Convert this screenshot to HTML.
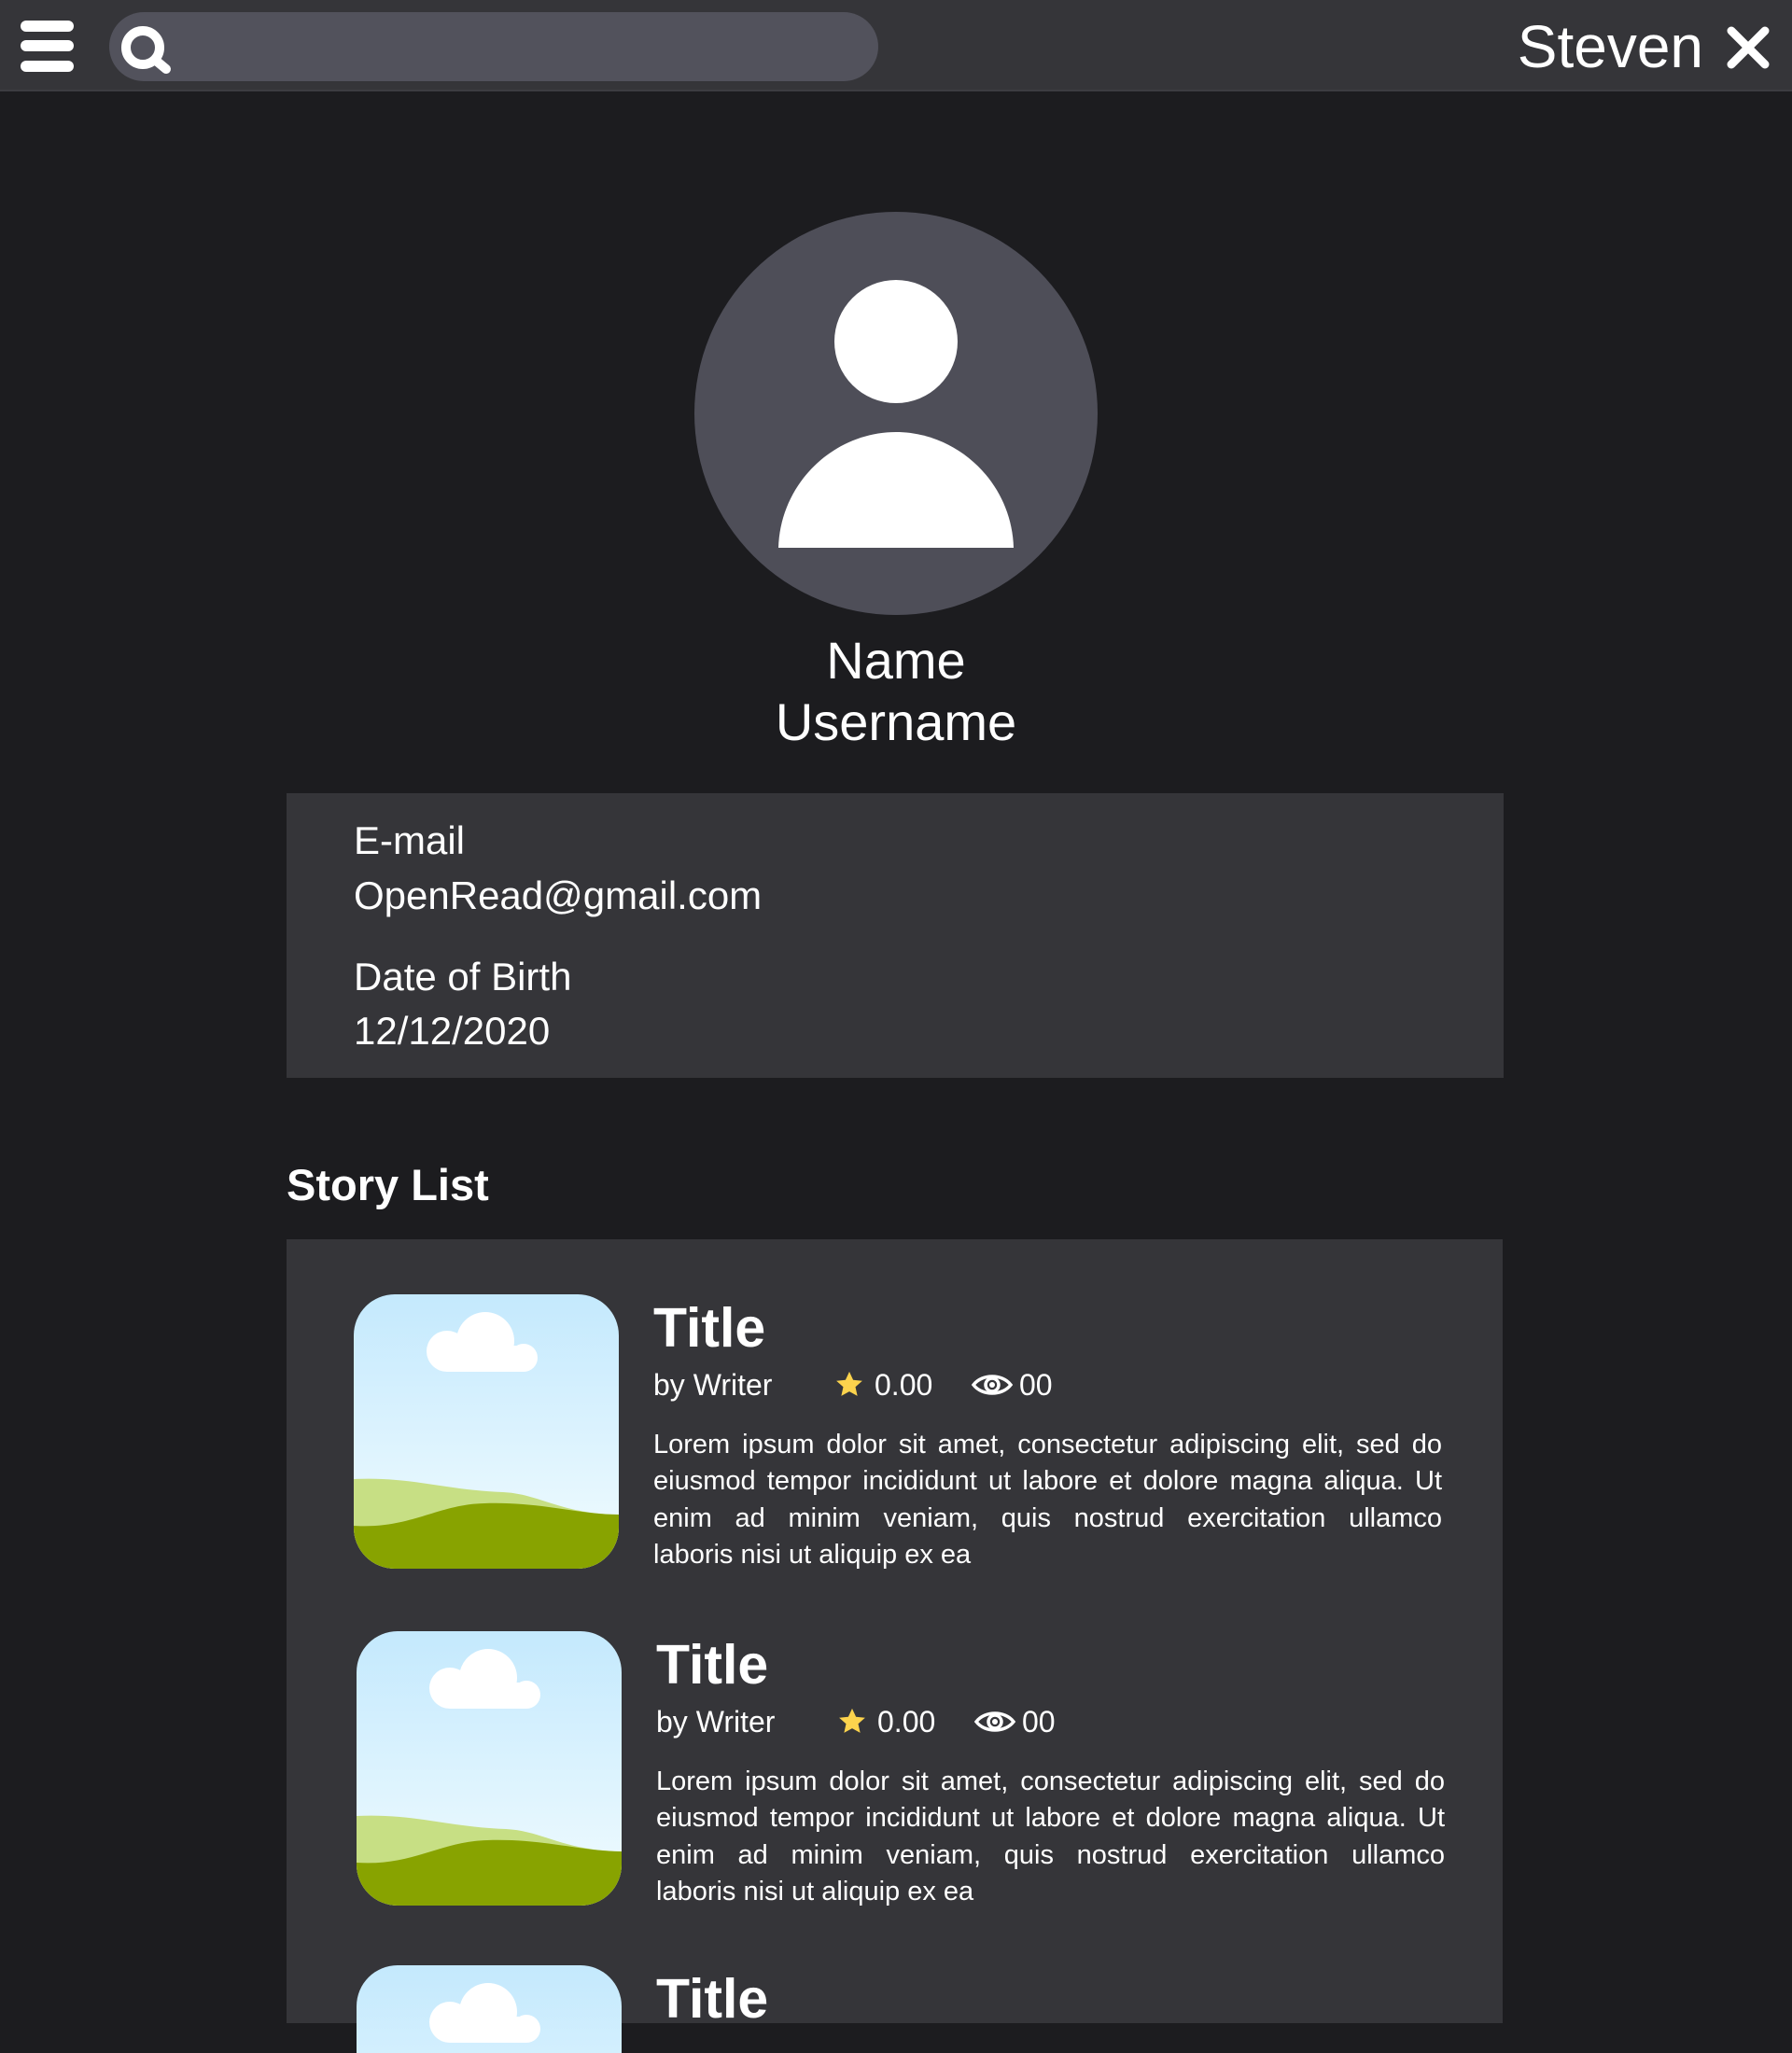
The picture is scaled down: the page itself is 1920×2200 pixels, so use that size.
<!DOCTYPE html>
<html style="width:1920px;height:2200px;overflow:hidden"><head><meta charset="utf-8">
<style>
*{margin:0;padding:0;box-sizing:border-box}
body{width:1920px;height:2200px;background:#1c1c1f;font-family:"Liberation Sans",sans-serif;color:#fff;position:relative;overflow:hidden}
.hdr{position:absolute;left:0;top:0;width:1920px;height:98px;background:#353539;border-bottom:2px solid #3c3c41}
.bar{position:absolute;left:22px;width:57px;height:12px;border-radius:6px;background:#fff}
.search{position:absolute;left:117px;top:13px;width:824px;height:74px;border-radius:37px;background:#52525c}
.user{position:absolute;right:95px;top:10px;font-size:64px;line-height:80px}
.abs{position:absolute}
.info{position:absolute;left:307px;top:850px;width:1304px;height:305px;background:#353539}
.info div{position:absolute;left:72px;font-size:42px;line-height:50px}
.panel{position:absolute;left:307px;top:1328px;width:1303px;height:840px;background:#353539}
.card{position:absolute;left:0;width:1303px}
.img{position:absolute;left:72px;top:59px;width:284px;height:294px}
.title{position:absolute;left:393px;top:60px;font-size:59px;font-weight:bold;line-height:70px}
.meta{position:absolute;left:393px;top:136px;font-size:32px;line-height:40px;white-space:nowrap}
.desc{position:absolute;left:393px;top:201px;width:845px;font-size:29px;line-height:39.3px}
.desc span{display:block;text-align:justify;text-align-last:justify;white-space:nowrap}
.desc span.l{text-align-last:left}
</style></head><body>
<div class="hdr">
 <div class="bar" style="top:22px"></div><div class="bar" style="top:43px"></div><div class="bar" style="top:65px"></div>
 <div class="search"></div>
 <svg class="abs" style="left:120px;top:20px" width="70" height="70" viewBox="120 20 70 70"><circle cx="153" cy="51" r="18" fill="none" stroke="#fff" stroke-width="10"/><line x1="166" y1="64" x2="178" y2="74" stroke="#fff" stroke-width="10" stroke-linecap="round"/></svg>
 <div class="user">Steven</div>
 <svg class="abs" style="left:1849px;top:27px" width="48" height="48" viewBox="0 0 48 48"><path d="M6 6L42 42M42 6L6 42" stroke="#fff" stroke-width="9" stroke-linecap="round"/></svg>
</div>
<svg class="abs" style="left:744px;top:227px" width="432" height="432" viewBox="0 0 432 432"><circle cx="216" cy="216" r="216" fill="#4e4e58"/><circle cx="216" cy="139" r="66" fill="#fff"/><path d="M90 360 C92 290 150 236 216 236 C282 236 340 290 342 360 Z" fill="#fff"/></svg>
<div class="abs" style="left:0;width:1920px;top:675px;text-align:center;font-size:56px;line-height:66px">Name<br>Username</div>
<div class="info">
 <div style="top:26px">E-mail</div>
 <div style="top:85px">OpenRead@gmail.com</div>
 <div style="top:172px">Date of Birth</div>
 <div style="top:230px">12/12/2020</div>
</div>
<div class="abs" style="left:307px;top:1240px;font-size:47px;font-weight:bold;line-height:60px">Story List</div>
<div class="panel">
<div class="card" style="top:0">
 <svg class="img" viewBox="0 0 284 294"><defs><linearGradient id="g" x1="0" y1="0" x2="0" y2="1"><stop offset="0" stop-color="#c4e9fd"/><stop offset="1" stop-color="#f2fcff"/></linearGradient><clipPath id="c"><rect width="284" height="294" rx="44"/></clipPath></defs><g clip-path="url(#c)"><rect width="284" height="294" fill="url(#g)"/><circle cx="100" cy="61" r="22" fill="#fff"/><circle cx="141" cy="50" r="31" fill="#fff"/><circle cx="182" cy="68" r="15" fill="#fff"/><rect x="100" y="55" width="82" height="28" fill="#fff"/><path d="M0 198 C60 195 100 210 160 212 C200 214 220 235 284 236 L284 294 L0 294Z" fill="#c7df84"/><path d="M0 248 C60 252 90 225 140 224 C200 222 240 236 284 236 L284 294 L0 294Z" fill="#88a300"/></g></svg>
 <div class="title">Title</div>
 <div class="meta">by Writer<svg style="position:absolute;left:193px;top:3px" width="34" height="34" viewBox="0 0 24 24"><path d="M12 2l2.9 6.3 6.9.7-5.2 4.6 1.5 6.8L12 17l-6.1 3.4 1.5-6.8L2.2 9l6.9-.7z" fill="#fcd34d"/></svg><span style="position:absolute;left:237px">0.00</span><svg style="position:absolute;left:340px;top:6px" width="46" height="28" viewBox="0 0 46 28"><path d="M3 14C12 2 34 2 43 14C34 26 12 26 3 14Z" fill="none" stroke="#fff" stroke-width="3.5"/><circle cx="23" cy="14" r="7" fill="none" stroke="#fff" stroke-width="3.5"/><circle cx="23" cy="14" r="3" fill="#fff"/></svg><span style="position:absolute;left:392px">00</span></div>
 <div class="desc"><span>Lorem ipsum dolor sit amet, consectetur adipiscing elit, sed do</span><span>eiusmod tempor incididunt ut labore et dolore magna aliqua. Ut</span><span>enim ad minim veniam, quis nostrud exercitation ullamco</span><span class="l">laboris nisi ut aliquip ex ea</span></div>
</div>
<div class="card" style="top:361px;left:3px">
 <svg class="img" viewBox="0 0 284 294"><g clip-path="url(#c)"><rect width="284" height="294" fill="url(#g)"/><circle cx="100" cy="61" r="22" fill="#fff"/><circle cx="141" cy="50" r="31" fill="#fff"/><circle cx="182" cy="68" r="15" fill="#fff"/><rect x="100" y="55" width="82" height="28" fill="#fff"/><path d="M0 198 C60 195 100 210 160 212 C200 214 220 235 284 236 L284 294 L0 294Z" fill="#c7df84"/><path d="M0 248 C60 252 90 225 140 224 C200 222 240 236 284 236 L284 294 L0 294Z" fill="#88a300"/></g></svg>
 <div class="title">Title</div>
 <div class="meta">by Writer<svg style="position:absolute;left:193px;top:3px" width="34" height="34" viewBox="0 0 24 24"><path d="M12 2l2.9 6.3 6.9.7-5.2 4.6 1.5 6.8L12 17l-6.1 3.4 1.5-6.8L2.2 9l6.9-.7z" fill="#fcd34d"/></svg><span style="position:absolute;left:237px">0.00</span><svg style="position:absolute;left:340px;top:6px" width="46" height="28" viewBox="0 0 46 28"><path d="M3 14C12 2 34 2 43 14C34 26 12 26 3 14Z" fill="none" stroke="#fff" stroke-width="3.5"/><circle cx="23" cy="14" r="7" fill="none" stroke="#fff" stroke-width="3.5"/><circle cx="23" cy="14" r="3" fill="#fff"/></svg><span style="position:absolute;left:392px">00</span></div>
 <div class="desc"><span>Lorem ipsum dolor sit amet, consectetur adipiscing elit, sed do</span><span>eiusmod tempor incididunt ut labore et dolore magna aliqua. Ut</span><span>enim ad minim veniam, quis nostrud exercitation ullamco</span><span class="l">laboris nisi ut aliquip ex ea</span></div>
</div>
<div class="card" style="top:719px;left:3px">
 <svg class="img" style="height:94px" viewBox="0 0 284 94" preserveAspectRatio="xMidYMin slice"><g clip-path="url(#c)"><rect width="284" height="294" fill="url(#g)"/><circle cx="100" cy="61" r="22" fill="#fff"/><circle cx="141" cy="50" r="31" fill="#fff"/><circle cx="182" cy="68" r="15" fill="#fff"/><rect x="100" y="55" width="82" height="28" fill="#fff"/></g></svg>
 <div class="title">Title</div>
</div>
</div>
</body></html>
